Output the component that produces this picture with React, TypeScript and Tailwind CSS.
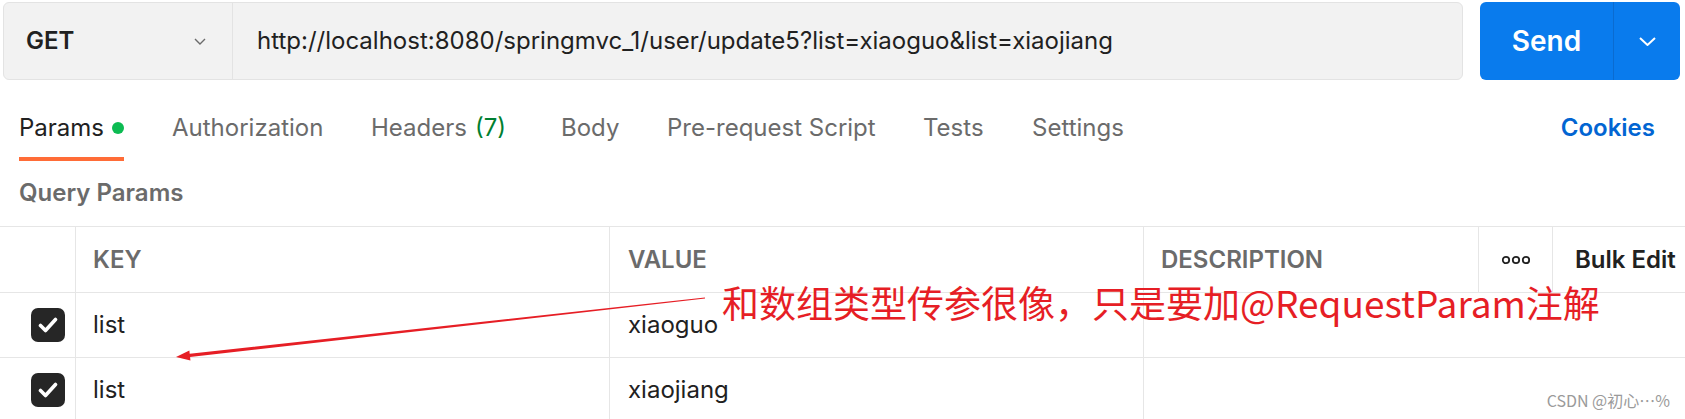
import React from 'react';

const tabs = [
  { label: 'Authorization', w: 'w-[199px]' },
  { label: 'Headers', count: '(7)', w: 'w-[190px]' },
  { label: 'Body', w: 'w-[106px]' },
  { label: 'Pre-request Script', w: 'w-[256px]' },
  { label: 'Tests', w: 'w-[109px]' },
  { label: 'Settings', w: 'w-[200px]' },
];

const rows = [
  { key: 'list', value: 'xiaoguo' },
  { key: 'list', value: 'xiaojiang' },
];

function Checkbox() {
  return (
    <div className="w-[34px] h-[34px] rounded-[7px] bg-[#262626] flex items-center justify-center">
      <svg width="20" height="16" viewBox="0 0 20 16" fill="none">
        <path d="M2.5 8.5 L7.5 13.5 L17.5 2.5" stroke="#fff" strokeWidth="3.6" strokeLinecap="round" strokeLinejoin="round" />
      </svg>
    </div>
  );
}

export default function App() {
  return (
    <div className="relative w-[1685px] h-[419px] overflow-hidden bg-white font-['Inter',sans-serif] text-[#212121]">
      {/* request bar */}
      <div className="flex items-start pl-[3px] pt-[2px]">
        <div className="flex w-[1460px] h-[78px] rounded-[6px] border border-[#e3e3e3] bg-[#f2f2f2]">
          <div className="flex items-center w-[229px] shrink-0 border-r border-[#e3e3e3] pl-[22px] pr-[26px]">
            <span className="text-[24px] font-semibold text-[#212121]">GET</span>
            <svg className="ml-auto" width="12" height="7" viewBox="0 0 12 7" fill="none">
              <path d="M1 1 L6 6 L11 1" stroke="#6b6b6b" strokeWidth="1.4" />
            </svg>
          </div>
          <div className="flex items-center pl-[24px] text-[24px] text-[#212121]">
            http://localhost:8080/springmvc_1/user/update5?list=xiaoguo&amp;list=xiaojiang
          </div>
        </div>
        <div className="ml-[17px] flex w-[200px] h-[78px] rounded-[6px] bg-[#097bed] text-white">
          <div className="flex items-center justify-center w-[134px] border-r border-[#0a6bd0] text-[28px] font-semibold">Send</div>
          <div className="flex flex-1 items-center justify-center">
            <svg width="17" height="9" viewBox="0 0 17 9" fill="none">
              <path d="M1 1 L8.5 8 L16 1" stroke="#fff" strokeWidth="2" />
            </svg>
          </div>
        </div>
      </div>

      {/* tabs */}
      <div className="flex items-start pl-[19px] pr-[30px] text-[24px] leading-[28px]">
        <div className="w-[153px]">
          <div className="inline-flex items-center pt-[34px] pb-[15px] border-b-[4px] border-[#ff6c37]">
            <span className="text-[#212121]">Params</span>
            <span className="ml-[8px] w-[12px] h-[12px] rounded-full bg-[#0cbb52]" />
          </div>
        </div>
        {tabs.map((t) => (
          <div key={t.label} className={`${t.w} pt-[34px] text-[#6b6b6b]`}>
            {t.label}
            {t.count && <span className="ml-[8px] text-[#007f31]">{t.count}</span>}
          </div>
        ))}
        <div className="ml-auto pt-[34px] font-semibold text-[#0265d2]">Cookies</div>
      </div>

      <div className="pl-[19px] mt-[18px] text-[24px] leading-[28px] font-semibold text-[#6b6b6b]">Query Params</div>

      {/* table */}
      <div className="mt-[19px] border-t border-[#e6e6e6] text-[24px]">
        <div className="grid grid-cols-[76px_534px_534px_335px_74px_1fr] h-[66px] border-b border-[#e6e6e6]">
          <div className="border-r border-[#e6e6e6]" />
          <div className="flex items-center pl-[17px] border-r border-[#e6e6e6] font-semibold text-[#6b6b6b]">KEY</div>
          <div className="flex items-center pl-[18px] border-r border-[#e6e6e6] font-semibold text-[#6b6b6b]">VALUE</div>
          <div className="flex items-center pl-[17px] border-r border-[#e6e6e6] font-semibold text-[#6b6b6b]">DESCRIPTION</div>
          <div className="flex items-center justify-center border-r border-[#e6e6e6]">
            <svg width="28" height="10" viewBox="0 0 28 10" fill="none">
              <circle cx="4" cy="5" r="3.2" stroke="#212121" strokeWidth="1.8" />
              <circle cx="14" cy="5" r="3.2" stroke="#212121" strokeWidth="1.8" />
              <circle cx="24" cy="5" r="3.2" stroke="#212121" strokeWidth="1.8" />
            </svg>
          </div>
          <div className="flex items-center pl-[22px] font-semibold text-[#212121]">Bulk Edit</div>
        </div>
        {rows.map((r, i) => (
          <div key={i} className="grid grid-cols-[76px_534px_534px_1fr] h-[65px] border-b border-[#e6e6e6]">
            <div className="flex items-center justify-end pr-[10px] border-r border-[#e6e6e6]">
              <Checkbox />
            </div>
            <div className="flex items-center pl-[17px] border-r border-[#e6e6e6]">{r.key}</div>
            <div className="flex items-center pl-[18px] border-r border-[#e6e6e6]">{r.value}</div>
            <div />
          </div>
        ))}
      </div>

      {/* annotation */}
      <svg className="absolute left-0 top-0 pointer-events-none" width="1685" height="419" viewBox="0 0 1685 419">
        <polygon
          points="704.93,297.4 705.07,298.6 190.08,357.04 190.45,360.42 176,357 189.35,350.48 189.72,353.86"
          fill="#e61e25"
        />
      </svg>
      <div className="absolute left-[722px] top-[284px] text-[37px] leading-[37px] text-[#e61e25] font-['Noto_Sans_CJK_SC',sans-serif] whitespace-nowrap">
        和数组类型传参很像，只是要加@RequestParam注解
      </div>
      <div className="absolute right-[15px] bottom-[9px] text-[16px] leading-[20px] text-[#9a9a9a] font-['Noto_Sans_CJK_SC',sans-serif]">
        CSDN @初心⋯%
      </div>
    </div>
  );
}
